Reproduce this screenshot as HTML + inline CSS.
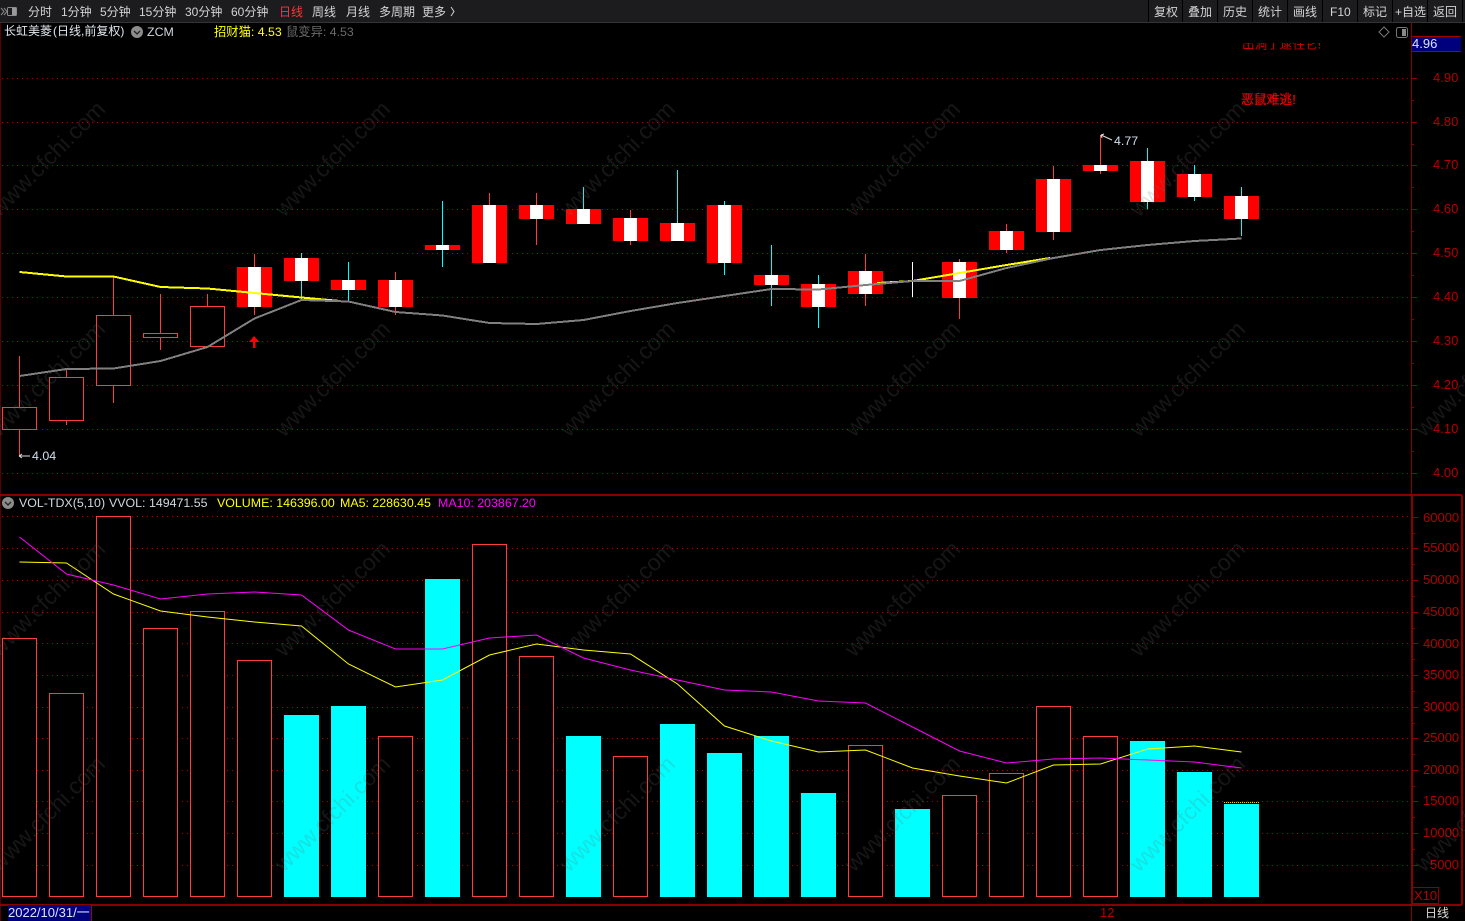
<!DOCTYPE html>
<html><head><meta charset="utf-8"><style>
html,body{margin:0;padding:0;background:#000;width:1465px;height:921px;overflow:hidden}
svg{display:block}
text{font-family:"Liberation Sans","Noto Sans CJK SC",sans-serif;font-size:12px}
.tb text{fill:#d4d4d4}
.ax text{fill:#b40000;font-size:13px}
.wm text{font-size:23px;fill:#707070;fill-opacity:.2;stroke:none}
.vh text{font-size:12.400px}
</style></head><body>
<svg width="1465" height="921" viewBox="0 0 1465 921" xmlns="http://www.w3.org/2000/svg">
<rect width="1465" height="921" fill="#000"/>
<rect width="1465" height="22" fill="#1c1c1f"/>
<rect y="22" width="1465" height="1" fill="#333"/>
<g fill="#000"><rect x="1148" y="0" width="1" height="22"/><rect x="1182" y="0" width="1" height="22"/><rect x="1217" y="0" width="1" height="22"/><rect x="1252" y="0" width="1" height="22"/><rect x="1287" y="0" width="1" height="22"/><rect x="1322" y="0" width="1" height="22"/><rect x="1357" y="0" width="1" height="22"/><rect x="1392" y="0" width="1" height="22"/><rect x="1427" y="0" width="1" height="22"/><rect x="1462" y="0" width="1" height="22"/></g>
<g fill="none" stroke="#8a8a8a" stroke-width="1"><path d="M1 8l3 3.500-3 3.500M4 8l3 3.500-3 3.500"/><rect x="7.500" y="7.500" width="9" height="8" rx="1"/></g><rect x="12" y="8" width="4" height="7" fill="#999"/>
<g class="tb">
<text x="28" y="16">分时</text><text x="61" y="16">1分钟</text><text x="100" y="16">5分钟</text><text x="139" y="16">15分钟</text><text x="185" y="16">30分钟</text><text x="231" y="16">60分钟</text>
<text x="279" y="16" style="fill:#f33">日线</text><text x="312" y="16">周线</text><text x="346" y="16">月线</text><text x="379" y="16">多周期</text><text x="422" y="16">更多</text>
<path d="M451 7l3 4.500-3 4.500" fill="none" stroke="#d4d4d4"/>
<text x="1154" y="16">复权</text><text x="1188" y="16">叠加</text><text x="1223" y="16">历史</text><text x="1258" y="16">统计</text><text x="1293" y="16">画线</text><text x="1330" y="16">F10</text><text x="1363" y="16">标记</text><text x="1395" y="16">+自选</text><text x="1433" y="16">返回</text>
</g>
<!-- grid -->
<g stroke="#b00000" stroke-width="1" stroke-dasharray="1 4" fill="none" shape-rendering="crispEdges">
<path d="M2 78.500H1410M2 122.500H1410M2 165.500H1410M2 209.500H1410M2 253.500H1410M2 297.500H1410M2 341.500H1410M2 385.500H1410M2 429.500H1410M2 473.500H1410"/>
<path d="M2 516.500H1410M2 548.500H1410M2 580.500H1410M2 612.500H1410M2 643.500H1410M2 675.500H1410M2 707.500H1410M2 738.500H1410M2 770.500H1410M2 801.500H1410M2 833.500H1410M2 865.500H1410"/>
</g>
<!-- frame -->
<g fill="#8a0000" shape-rendering="crispEdges">
<rect x="0" y="23" width="1" height="898" fill="#5a0000"/>
<rect x="1411" y="23" width="1" height="471"/>
<rect x="0" y="494" width="1462" height="2"/>
<rect x="1411" y="495" width="2" height="410"/>
<rect x="1461" y="495" width="2" height="410"/>
<rect x="0" y="904" width="1462" height="2"/>
<rect x="1411" y="905" width="1" height="16"/>
<rect x="1412" y="78" width="5" height="1"/><rect x="1412" y="122" width="5" height="1"/><rect x="1412" y="165" width="5" height="1"/><rect x="1412" y="209" width="5" height="1"/><rect x="1412" y="253" width="5" height="1"/><rect x="1412" y="297" width="5" height="1"/><rect x="1412" y="341" width="5" height="1"/><rect x="1412" y="385" width="5" height="1"/><rect x="1412" y="429" width="5" height="1"/><rect x="1412" y="473" width="5" height="1"/>
<rect x="1412" y="100" width="2" height="1"/><rect x="1412" y="144" width="2" height="1"/><rect x="1412" y="187" width="2" height="1"/><rect x="1412" y="231" width="2" height="1"/><rect x="1412" y="275" width="2" height="1"/><rect x="1412" y="319" width="2" height="1"/><rect x="1412" y="363" width="2" height="1"/><rect x="1412" y="407" width="2" height="1"/><rect x="1412" y="451" width="2" height="1"/>
<rect x="1413" y="517" width="5" height="1"/><rect x="1413" y="548" width="5" height="1"/><rect x="1413" y="580" width="5" height="1"/><rect x="1413" y="612" width="5" height="1"/><rect x="1413" y="643" width="5" height="1"/><rect x="1413" y="675" width="5" height="1"/><rect x="1413" y="707" width="5" height="1"/><rect x="1413" y="738" width="5" height="1"/><rect x="1413" y="770" width="5" height="1"/><rect x="1413" y="801" width="5" height="1"/><rect x="1413" y="833" width="5" height="1"/><rect x="1413" y="865" width="5" height="1"/>
<rect x="1413" y="533" width="2" height="1"/><rect x="1413" y="564" width="2" height="1"/><rect x="1413" y="596" width="2" height="1"/><rect x="1413" y="628" width="2" height="1"/><rect x="1413" y="659" width="2" height="1"/><rect x="1413" y="691" width="2" height="1"/><rect x="1413" y="723" width="2" height="1"/><rect x="1413" y="754" width="2" height="1"/><rect x="1413" y="786" width="2" height="1"/><rect x="1413" y="817" width="2" height="1"/><rect x="1413" y="849" width="2" height="1"/>
</g>
<rect x="1412" y="36" width="49" height="16" fill="#00007f"/>
<rect x="1412" y="36" width="49" height="1" fill="#a00000"/><rect x="1412" y="51" width="49" height="1" fill="#a00000"/>
<text x="1412" y="48" style="font-size:13px" fill="#d8e4ff">4.96</text>
<g class="ax">
<text x="1433" y="82">4.90</text><text x="1433" y="126">4.80</text><text x="1433" y="169">4.70</text><text x="1433" y="213">4.60</text><text x="1433" y="257">4.50</text><text x="1433" y="301">4.40</text><text x="1433" y="345">4.30</text><text x="1433" y="389">4.20</text><text x="1433" y="433">4.10</text><text x="1433" y="477">4.00</text>
<text x="1423" y="522">60000</text><text x="1423" y="552">55000</text><text x="1423" y="584">50000</text><text x="1423" y="616">45000</text><text x="1423" y="648">40000</text><text x="1423" y="679">35000</text><text x="1423" y="711">30000</text><text x="1423" y="742">25000</text><text x="1423" y="774">20000</text><text x="1423" y="805">15000</text><text x="1423" y="837">10000</text><text x="1430" y="869">5000</text>
<text x="1414" y="900">X10</text>
</g>
<rect x="1412.500" y="887.500" width="26" height="16" fill="none" stroke="#8a0000"/>
<!-- header -->
<text x="4" y="35" fill="#dfe6ee">长虹美菱<tspan dx="1">(日线,前复权)</tspan></text>
<circle cx="137" cy="32" r="6" fill="#8c8c8c"/><path d="M134 31l3 3 3-3" fill="none" stroke="#222" stroke-width="1.300"/>
<text x="147" y="36" fill="#cfd8e0" style="font-size:12.400px">ZCM</text>
<text x="214" y="36" fill="#ffff00" style="font-size:12.300px">招财猫: 4.53</text>
<text x="286" y="36" fill="#6a6a6a" style="font-size:12.300px">鼠变异: 4.53</text>
<path d="M1384 27l5 5-5 5-5-5z" fill="none" stroke="#777"/>
<rect x="1396.500" y="27.500" width="11" height="10" rx="2" fill="none" stroke="#777"/><rect x="1402" y="29" width="4" height="7" fill="#888"/>
<svg x="1200" y="43" width="200" height="7" overflow="hidden"><text x="42" y="5.500" fill="#d00000" style="font-size:12.600px">出洞了逮住它!</text></svg>
<text x="1241" y="104" fill="#f00000" stroke="#f00000" stroke-width=".25" style="font-size:12.800px">恶鼠难逃!</text>
<!-- wicks -->
<g shape-rendering="crispEdges" stroke-width="1" fill="none">
<path stroke="#ff3c3c" d="M19.500 356V456M66.500 368V425M113.500 276V403M160.500 294V350M207.500 294V347M254.500 254V315M395.500 272V315M489.500 193V263M536.500 193V245M630.500 210V245M865.500 254V306M959.500 259V319M1006.500 224V253M1053.500 166V240M1100.500 135V174"/>
<path stroke="#00ffff" d="M301.500 253V300M348.500 262V302M442.500 201V267M583.500 187V224M677.500 170V241M724.500 201V275M771.500 245V306M818.500 275V328M1147.500 148V209M1194.500 165V201M1241.500 187V236"/>
<path stroke="#fff" d="M912.500 262V297"/>
</g>
<!-- hollow candles -->
<g shape-rendering="crispEdges" fill="#000" stroke="#ff3c3c">
<rect x="2.500" y="407.500" width="34" height="22"/><rect x="49.500" y="377.500" width="34" height="43"/><rect x="96.500" y="315.500" width="34" height="70"/><rect x="143.500" y="333.500" width="34" height="4"/><rect x="190.500" y="306.500" width="34" height="40"/>
</g>
<!-- filled candles -->
<g shape-rendering="crispEdges" fill="#f00">
<rect x="237" y="267" width="35" height="40"/><rect x="284" y="258" width="35" height="23"/><rect x="331" y="280" width="35" height="10"/><rect x="378" y="280" width="35" height="27"/><rect x="425" y="245" width="35" height="5"/><rect x="472" y="205" width="35" height="58"/><rect x="519" y="205" width="35" height="14"/><rect x="566" y="209" width="35" height="15"/><rect x="613" y="218" width="35" height="23"/><rect x="660" y="223" width="35" height="18"/><rect x="707" y="205" width="35" height="58"/><rect x="754" y="275" width="35" height="10"/><rect x="801" y="284" width="35" height="23"/><rect x="848" y="271" width="35" height="23"/><rect x="942" y="262" width="35" height="36"/><rect x="989" y="231" width="35" height="19"/><rect x="1036" y="179" width="35" height="53"/><rect x="1083" y="165" width="35" height="6"/><rect x="1130" y="161" width="35" height="41"/><rect x="1177" y="174" width="35" height="23"/><rect x="1224" y="196" width="35" height="23"/>
</g>
<g shape-rendering="crispEdges" fill="#fff">
<rect x="248" y="267" width="13" height="40"/><rect x="295" y="258" width="13" height="23"/><rect x="342" y="280" width="13" height="10"/><rect x="389" y="280" width="13" height="27"/><rect x="436" y="245" width="13" height="5"/><rect x="483" y="205" width="13" height="58"/><rect x="530" y="205" width="13" height="14"/><rect x="577" y="209" width="13" height="15"/><rect x="624" y="218" width="13" height="23"/><rect x="671" y="223" width="13" height="18"/><rect x="718" y="205" width="13" height="58"/><rect x="765" y="275" width="13" height="10"/><rect x="812" y="284" width="13" height="23"/><rect x="859" y="271" width="13" height="23"/><rect x="953" y="262" width="13" height="36"/><rect x="1000" y="231" width="13" height="19"/><rect x="1047" y="179" width="13" height="53"/><rect x="1094" y="165" width="13" height="6"/><rect x="1141" y="161" width="13" height="41"/><rect x="1188" y="174" width="13" height="23"/><rect x="1235" y="196" width="13" height="23"/>
</g>
<!-- MA lines -->
<g fill="none" stroke-width="2" shape-rendering="crispEdges">
<path stroke="#ffff00" d="M19.500 272L66.500 276.500L113.500 276.500L160.500 287L207.500 288.500L254.500 293L301.500 297.500L340 301"/>
<path stroke="#ffff00" d="M877 283L912.500 281L959.500 273L1006.500 265L1050 258"/>
<path stroke="#808080" d="M19.500 376L66.500 369L113.500 368.500L160.500 361L207.500 347L254.500 318.500L301.500 300L348.500 301.500L395.500 312L442.500 315.500L489.500 323L536.500 324L583.500 320L630.500 311L677.500 303L724.500 296L771.500 289L818.500 289.500L865.500 285L912.500 281L959.500 281L1006.500 268L1053.500 258L1100.500 250L1147.500 245L1194.500 241L1241.500 238.500"/>
</g>
<path d="M254 336l-5 6h4v6h2.500v-6h4z" fill="#f00"/>
<path d="M19 456h11M19 456l3-2M19 456l3 2" stroke="#ddd" fill="none"/>
<text x="32" y="460" fill="#cfe0f0" style="font-size:12.400px">4.04</text>
<path d="M1101 135l11 5M1101 135l3-1M1101 135l1 3" stroke="#ddd" fill="none"/>
<text x="1114" y="145" fill="#cfe0f0" style="font-size:12.400px">4.77</text>
<!-- vol header -->
<circle cx="8" cy="503" r="6" fill="#8c8c8c"/><path d="M5 502l3 3 3-3" fill="none" stroke="#222" stroke-width="1.300"/>
<g class="vh">
<text x="19" y="507" fill="#cfd8e0">VOL-TDX(5,10)</text>
<text x="109" y="507" fill="#cfd8e0">VVOL: 149471.55</text>
<text x="217" y="507" fill="#ffff00">VOLUME: 146396.00</text>
<text x="340" y="507" fill="#ffff00">MA5: 228630.45</text>
<text x="438" y="507" fill="#ff00ff">MA10: 203867.20</text>
</g>
<!-- volume bars -->
<g shape-rendering="crispEdges" fill="#000" stroke="#ff3c3c">
<rect x="2.500" y="638.500" width="34" height="258"/><rect x="49.500" y="693.500" width="34" height="203"/><rect x="96.500" y="516.500" width="34" height="380"/><rect x="143.500" y="628.500" width="34" height="268"/><rect x="190.500" y="611.500" width="34" height="285"/><rect x="237.500" y="660.500" width="34" height="236"/><rect x="378.500" y="736.500" width="34" height="160"/><rect x="472.500" y="544.500" width="34" height="352"/><rect x="519.500" y="656.500" width="34" height="240"/><rect x="613.500" y="756.500" width="34" height="140"/><rect x="848.500" y="745.500" width="34" height="151"/><rect x="942.500" y="795.500" width="34" height="101"/><rect x="989.500" y="773.500" width="34" height="123"/><rect x="1036.500" y="706.500" width="34" height="190"/><rect x="1083.500" y="736.500" width="34" height="160"/>
</g>
<g shape-rendering="crispEdges" fill="#00ffff">
<rect x="284" y="715" width="35" height="182"/><rect x="331" y="706" width="35" height="191"/><rect x="425" y="579" width="35" height="318"/><rect x="566" y="736" width="35" height="161"/><rect x="660" y="724" width="35" height="173"/><rect x="707" y="753" width="35" height="144"/><rect x="754" y="736" width="35" height="161"/><rect x="801" y="793" width="35" height="104"/><rect x="895" y="809" width="35" height="88"/><rect x="1130" y="741" width="35" height="156"/><rect x="1177" y="772" width="35" height="125"/><rect x="1224" y="804" width="35" height="93"/>
</g>
<path d="M1224 802.500H1259" stroke="#ffd000" stroke-dasharray="1 1" shape-rendering="crispEdges"/>
<g fill="none" stroke-width="1">
<path stroke="#ffff00" d="M19.500 562L66.500 563L113.500 594L160.500 611L207.500 617L254.500 622L301.500 626L348.500 664L395.500 687L442.500 680L489.500 655L536.500 644L583.500 650L630.500 654L677.500 684L724.500 726L771.500 741L818.500 752L865.500 750L912.500 768L959.500 776L1006.500 783L1053.500 765L1100.500 764L1147.500 749L1194.500 746L1241.500 752"/>
<path stroke="#ff00ff" d="M19.500 537L66.500 574L113.500 585L160.500 599L207.500 594L254.500 592L301.500 595L348.500 630L395.500 649L442.500 649L489.500 638L536.500 635L583.500 658L630.500 670L677.500 680L724.500 690L771.500 692L818.500 701L865.500 703L912.500 727L959.500 751L1006.500 763L1053.500 759L1100.500 758L1147.500 760L1194.500 762L1241.500 768"/>
</g>
<!-- bottom -->
<rect x="8" y="905" width="83" height="16" fill="#00007f"/>
<rect x="91" y="905" width="1" height="16" fill="#a00000"/>
<text x="8" y="917" fill="#d8e4ff" style="font-size:13px">2022/10/31/一</text>
<text x="1100" y="917" fill="#b40000" style="font-size:13px">12</text>
<text x="1425" y="917" fill="#dcdcdc">日线</text>
<!-- watermarks -->
<g class="wm">
<text transform="translate(-1 218) rotate(-45)">www.cfchi.com</text><text transform="translate(284 218) rotate(-45)">www.cfchi.com</text><text transform="translate(569 218) rotate(-45)">www.cfchi.com</text><text transform="translate(854 218) rotate(-45)">www.cfchi.com</text><text transform="translate(1139 218) rotate(-45)">www.cfchi.com</text>
<text transform="translate(-1 438) rotate(-45)">www.cfchi.com</text><text transform="translate(284 438) rotate(-45)">www.cfchi.com</text><text transform="translate(569 438) rotate(-45)">www.cfchi.com</text><text transform="translate(854 438) rotate(-45)">www.cfchi.com</text><text transform="translate(1139 438) rotate(-45)">www.cfchi.com</text><text transform="translate(1424 438) rotate(-45)">www.cfchi.com</text>
<text transform="translate(-1 658) rotate(-45)">www.cfchi.com</text><text transform="translate(284 658) rotate(-45)">www.cfchi.com</text><text transform="translate(569 658) rotate(-45)">www.cfchi.com</text><text transform="translate(854 658) rotate(-45)">www.cfchi.com</text><text transform="translate(1139 658) rotate(-45)">www.cfchi.com</text>
<text transform="translate(-1 873) rotate(-45)">www.cfchi.com</text><text transform="translate(284 873) rotate(-45)">www.cfchi.com</text><text transform="translate(569 873) rotate(-45)">www.cfchi.com</text><text transform="translate(854 873) rotate(-45)">www.cfchi.com</text><text transform="translate(1139 873) rotate(-45)">www.cfchi.com</text><text transform="translate(1424 873) rotate(-45)">www.cfchi.com</text>
</g>
</svg>
</body></html>
